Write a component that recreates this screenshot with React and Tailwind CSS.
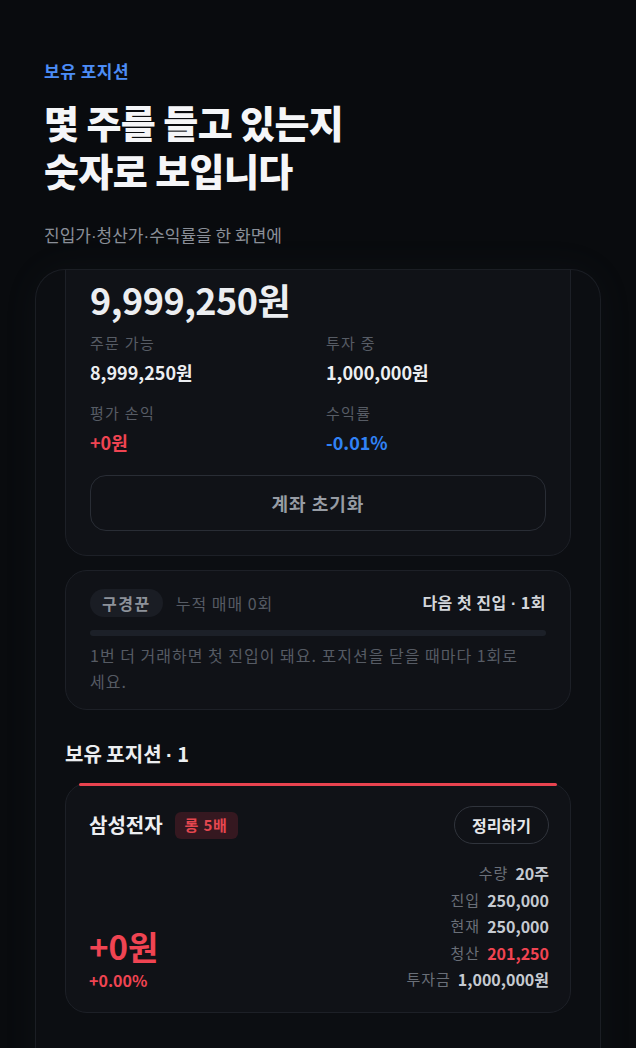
import React from 'react';

const FONT = { fontFamily: '"Noto Sans CJK KR", "Noto Sans", sans-serif' };

// 가운뎃점은 좁은 글꼴로
const Dot = () => <span style={{ fontFamily: '"Liberation Sans", sans-serif' }}>·</span>;

// --- 데이터 ---
const summary = [
    { label: '주문 가능', value: '8,999,250원', color: 'text-[#eceef1]' },
    { label: '투자 중', value: '1,000,000원', color: 'text-[#eceef1]' },
    { label: '평가 손익', value: '+0원', color: 'text-[#f04452]' },
    { label: '수익률', value: '-0.01%', color: 'text-[#3182f6]' },
];

const details = [
    { label: '수량', value: '20주' },
    { label: '진입', value: '250,000' },
    { label: '현재', value: '250,000' },
    { label: '청산', value: '201,250', red: true },
    { label: '투자금', value: '1,000,000원' },
];

function AccountCard() {
    // 위쪽은 폰 화면 밖으로 스크롤된 상태
    return (
        <div className="-mt-[44px] rounded-[22px] border border-[#1d2027] bg-[#101217] px-[24px] pt-[50px] pb-[24px]">
            <p className="text-[36px] leading-[44px] font-bold tracking-[-0.5px] text-[#eceef1]">9,999,250원</p>
            <div className="grid grid-cols-2 gap-x-4 gap-y-[17px] mt-[11px]">
                {summary.map((s) => (
                    <div key={s.label} className="flex flex-col gap-[6px]">
                        <span className="text-[15px] leading-[22px] tracking-[1.3px] text-[#575c65]">{s.label}</span>
                        <span className={`text-[18px] leading-[25px] font-semibold ${s.color}`}>{s.value}</span>
                    </div>
                ))}
            </div>
            <button className="mt-[20px] w-full h-[56px] rounded-[16px] border border-[#292d35] text-[18px] font-bold tracking-[1px] text-[#979ca4]">
                계좌 초기화
            </button>
        </div>
    );
}

function LevelCard() {
    return (
        <div className="mt-[14px] rounded-[22px] border border-[#1d2027] bg-[#101217] px-[24px] pt-[18px] pb-[15px]">
            <div className="flex items-center justify-between">
                <div className="flex items-center gap-[13px]">
                    <span className="h-[28px] px-[12px] rounded-full bg-[#1a1d24] flex items-center text-[16px] font-bold tracking-[1.5px] text-[#8d929a]">구경꾼</span>
                    <span className="text-[16px] tracking-[1px] text-[#565b64]">누적 매매 0회</span>
                </div>
                <span className="text-[16px] font-bold tracking-[0.5px] text-[#d3d6db]">다음 첫 진입 <Dot /> 1회</span>
            </div>
            <div className="mt-[13px] h-[6px] rounded-full bg-[#1c2028]" />
            <p className="mt-[6px] text-[16px] leading-[26px] tracking-[1px] break-keep text-[#565b64]">
                1번 더 거래하면 첫 진입이 돼요. 포지션을 닫을 때마다 1회로 세요.
            </p>
        </div>
    );
}

function PositionCard() {
    return (
        <div className="mt-[14px] rounded-[22px] border border-[#1d2027] bg-[#101217] pb-[19px]">
            <div className="-mt-px mx-[13px] h-[3px] rounded-full bg-[#e8434f]" />
            <div className="pl-[23px] pr-[21px] pt-[20px]">
                <div className="flex items-center justify-between">
                    <div className="flex items-center gap-[12px]">
                        <span className="text-[20px] font-semibold text-[#eceef1]">삼성전자</span>
                        <span className="h-[27px] px-[10px] rounded-[6px] bg-[#351820] flex items-center text-[15px] font-bold tracking-[0.8px] text-[#e5474f]">롱 5배</span>
                    </div>
                    <button className="h-[38px] px-[17px] rounded-full border border-[#30343c] text-[16px] font-bold text-[#e6e8eb]">
                        정리하기
                    </button>
                </div>
                <div className="mt-[16px] flex items-end justify-between">
                    <div className="flex flex-col pb-[2px]">
                        <span className="text-[33px] leading-[40px] font-bold text-[#f04452]">+0원</span>
                        <span className="mt-[3px] text-[16px] leading-[22px] font-semibold text-[#f04452]">+0.00%</span>
                    </div>
                    <div className="flex flex-col items-end">
                        {details.map((d) => (
                            <div key={d.label} className="flex items-center gap-[7px] leading-[26.5px]">
                                <span className="text-[15px] tracking-[1px] text-[#6a6f78]">{d.label}</span>
                                <span className={`text-[16px] font-bold ${d.red ? 'text-[#f04452]' : 'text-[#c6cad1]'}`}>{d.value}</span>
                            </div>
                        ))}
                    </div>
                </div>
            </div>
        </div>
    );
}

export default function App() {
    return (
        <div style={FONT} className="h-[1048px] overflow-hidden bg-[#090b0e]">
            <div className="px-[44px] pt-[59px]">
                <p className="text-[17px] leading-[24px] font-bold tracking-[0.5px] text-[#4c8df6]">보유 포지션</p>
                <h1 className="mt-[15px] text-[38px] leading-[48px] font-extrabold tracking-[-0.6px] text-[#f5f6f8]">
                    몇 주를 들고 있는지
                    <br />
                    숫자로 보입니다
                </h1>
                <p className="mt-[29px] text-[17px] leading-[24px] text-[#8a8f98]">진입가<Dot />청산가<Dot />수익률을 한 화면에</p>
            </div>

            <div className="mt-[20px] mx-[35px] h-[820px] overflow-hidden rounded-t-[30px] border border-b-0 border-[#1b1e24] bg-[#0c0e12] px-[29px] shadow-[0_0_40px_rgba(120,130,150,0.05)]">
                <AccountCard />
                <LevelCard />
                <h2 className="mt-[30px] text-[20px] leading-[28px] font-bold text-[#eceef1]">보유 포지션 <Dot /> 1</h2>
                <PositionCard />
            </div>
        </div>
    );
}
